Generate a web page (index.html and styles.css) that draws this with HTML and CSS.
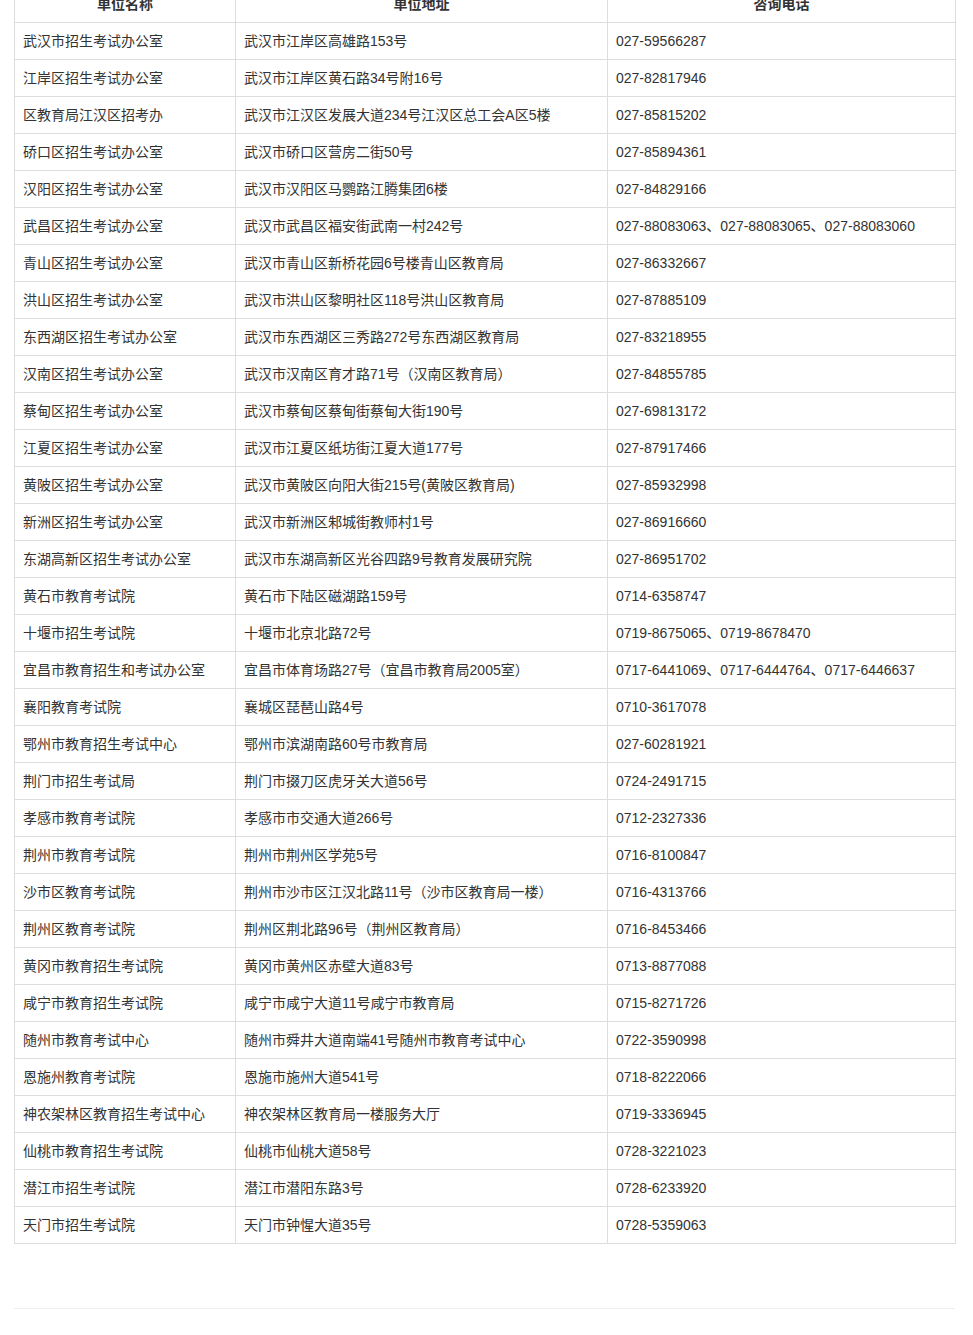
FILE: index.html
```html
<!DOCTYPE html>
<html lang="zh-CN">
<head>
<meta charset="utf-8">
<title>招生考试机构</title>
<link rel="stylesheet" href="styles.css">
</head>
<body>
<div class="page">
<table class="info">
<colgroup><col class="c1"><col class="c2"><col class="c3"></colgroup>
<thead>
<tr><th>单位名称</th><th>单位地址</th><th>咨询电话</th></tr>
</thead>
<tbody>
<tr><td>武汉市招生考试办公室</td><td>武汉市江岸区高雄路153号</td><td>027-59566287</td></tr>
<tr><td>江岸区招生考试办公室</td><td>武汉市江岸区黄石路34号附16号</td><td>027-82817946</td></tr>
<tr><td>区教育局江汉区招考办</td><td>武汉市江汉区发展大道234号江汉区总工会A区5楼</td><td>027-85815202</td></tr>
<tr><td>硚口区招生考试办公室</td><td>武汉市硚口区营房二街50号</td><td>027-85894361</td></tr>
<tr><td>汉阳区招生考试办公室</td><td>武汉市汉阳区马鹦路江腾集团6楼</td><td>027-84829166</td></tr>
<tr><td>武昌区招生考试办公室</td><td>武汉市武昌区福安街武南一村242号</td><td>027-88083063、027-88083065、027-88083060</td></tr>
<tr><td>青山区招生考试办公室</td><td>武汉市青山区新桥花园6号楼青山区教育局</td><td>027-86332667</td></tr>
<tr><td>洪山区招生考试办公室</td><td>武汉市洪山区黎明社区118号洪山区教育局</td><td>027-87885109</td></tr>
<tr><td>东西湖区招生考试办公室</td><td>武汉市东西湖区三秀路272号东西湖区教育局</td><td>027-83218955</td></tr>
<tr><td>汉南区招生考试办公室</td><td>武汉市汉南区育才路71号（汉南区教育局）</td><td>027-84855785</td></tr>
<tr><td>蔡甸区招生考试办公室</td><td>武汉市蔡甸区蔡甸街蔡甸大街190号</td><td>027-69813172</td></tr>
<tr><td>江夏区招生考试办公室</td><td>武汉市江夏区纸坊街江夏大道177号</td><td>027-87917466</td></tr>
<tr><td>黄陂区招生考试办公室</td><td>武汉市黄陂区向阳大街215号(黄陂区教育局)</td><td>027-85932998</td></tr>
<tr><td>新洲区招生考试办公室</td><td>武汉市新洲区邾城街教师村1号</td><td>027-86916660</td></tr>
<tr><td>东湖高新区招生考试办公室</td><td>武汉市东湖高新区光谷四路9号教育发展研究院</td><td>027-86951702</td></tr>
<tr><td>黄石市教育考试院</td><td>黄石市下陆区磁湖路159号</td><td>0714-6358747</td></tr>
<tr><td>十堰市招生考试院</td><td>十堰市北京北路72号</td><td>0719-8675065、0719-8678470</td></tr>
<tr><td>宜昌市教育招生和考试办公室</td><td>宜昌市体育场路27号（宜昌市教育局2005室）</td><td>0717-6441069、0717-6444764、0717-6446637</td></tr>
<tr><td>襄阳教育考试院</td><td>襄城区琵琶山路4号</td><td>0710-3617078</td></tr>
<tr><td>鄂州市教育招生考试中心</td><td>鄂州市滨湖南路60号市教育局</td><td>027-60281921</td></tr>
<tr><td>荆门市招生考试局</td><td>荆门市掇刀区虎牙关大道56号</td><td>0724-2491715</td></tr>
<tr><td>孝感市教育考试院</td><td>孝感市市交通大道266号</td><td>0712-2327336</td></tr>
<tr><td>荆州市教育考试院</td><td>荆州市荆州区学苑5号</td><td>0716-8100847</td></tr>
<tr><td>沙市区教育考试院</td><td>荆州市沙市区江汉北路11号（沙市区教育局一楼）</td><td>0716-4313766</td></tr>
<tr><td>荆州区教育考试院</td><td>荆州区荆北路96号（荆州区教育局）</td><td>0716-8453466</td></tr>
<tr><td>黄冈市教育招生考试院</td><td>黄冈市黄州区赤壁大道83号</td><td>0713-8877088</td></tr>
<tr><td>咸宁市教育招生考试院</td><td>咸宁市咸宁大道11号咸宁市教育局</td><td>0715-8271726</td></tr>
<tr><td>随州市教育考试中心</td><td>随州市舜井大道南端41号随州市教育考试中心</td><td>0722-3590998</td></tr>
<tr><td>恩施州教育考试院</td><td>恩施市施州大道541号</td><td>0718-8222066</td></tr>
<tr><td>神农架林区教育招生考试中心</td><td>神农架林区教育局一楼服务大厅</td><td>0719-3336945</td></tr>
<tr><td>仙桃市教育招生考试院</td><td>仙桃市仙桃大道58号</td><td>0728-3221023</td></tr>
<tr><td>潜江市招生考试院</td><td>潜江市潜阳东路3号</td><td>0728-6233920</td></tr>
<tr><td>天门市招生考试院</td><td>天门市钟惺大道35号</td><td>0728-5359063</td></tr>
</tbody>
</table>
<div class="divider"></div>
</div>
</body>
</html>
```

FILE: styles.css
```css
html, body {
  margin: 0;
  padding: 0;
  background: #fff;
}
body {
  font-family: "Liberation Sans", Arial, "Noto Sans CJK SC", sans-serif;
  font-size: 14px;
  color: #333;
}
.page {
  padding: 0 18px 0 14px;
  margin-top: -15px;
}
.info {
  border-collapse: collapse;
  width: 941px;
  table-layout: fixed;
}
.c1 { width: 221px; }
.c2 { width: 372px; }
.c3 { width: 348px; }
.info th, .info td {
  border: 1px solid #ddd;
  height: 36px;
  padding: 0 8px;
  line-height: 20px;
  vertical-align: middle;
  white-space: nowrap;
}
.info th {
  font-weight: bold;
  text-align: center;
}
.info td {
  text-align: left;
}
.divider {
  margin-top: 64px;
  width: 941px;
  height: 1px;
  background: #eee;
}
```
